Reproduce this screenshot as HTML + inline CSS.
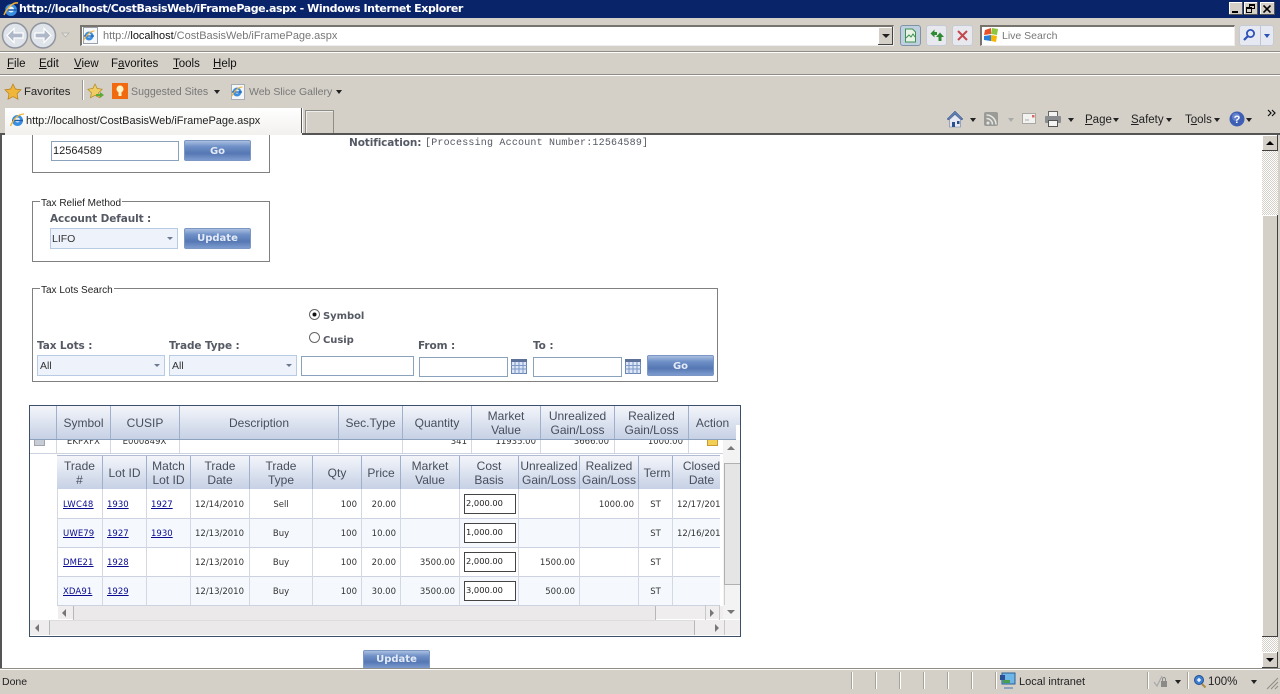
<!DOCTYPE html>
<html><head><meta charset="utf-8"><title>iFramePage</title>
<style>
html,body{margin:0;padding:0;width:1280px;height:694px;overflow:hidden;background:#fff}
body{position:relative;font-family:"Liberation Sans",sans-serif;color:#000}
.a,.t,.c{position:absolute;box-sizing:border-box}
.t{white-space:nowrap;font-size:12px;line-height:14px}
.v{font-family:"DejaVu Sans",sans-serif}
u{text-decoration:underline}
.lb{font-family:"DejaVu Sans",sans-serif;font-weight:bold;font-size:10.5px;line-height:14px;color:#555963;white-space:nowrap;position:absolute;letter-spacing:-.1px}
.fs{position:absolute;box-sizing:border-box;border:1px solid #808080}
.lg{position:absolute;background:#fff;font-size:10px;line-height:12px;padding:0 1px;color:#222;white-space:nowrap}
.btn{position:absolute;box-sizing:border-box;border:1px solid #7c97c4;border-radius:2px;background:linear-gradient(#a9bfe0 0,#6e8fc6 30%,#5577b3 65%,#7d9bcf 100%);color:#e4ebf7;font-family:"DejaVu Sans",sans-serif;font-weight:bold;font-size:10px;text-align:center;line-height:20px}
.inp{position:absolute;box-sizing:border-box;background:#fff;border:1px solid #8ba2bd;font-size:11px;line-height:19px;padding-left:1px;color:#222}
.sel{position:absolute;box-sizing:border-box;background:#edf2fb;border:1px solid #b8cbe4;font-size:10.5px;line-height:20px;padding-left:2px;color:#333}
.sel:after{content:"";position:absolute;right:4px;top:8px;border:3px solid transparent;border-top:3px solid #6b7a90;border-bottom:0}
.hd{position:absolute;background:linear-gradient(#f3f5fa 0,#dfe5f1 45%,#c6d1e5 100%);overflow:hidden}
.hc{position:absolute;top:0;height:100%;box-sizing:border-box;border-right:1px solid #9eb0cb;display:flex;align-items:center;justify-content:center;text-align:center;font-size:12px;line-height:14px;color:#474e5c;padding-top:1px;white-space:nowrap}
.vl{position:absolute;width:1px;background:#d3d8e3}
.hl{position:absolute;height:1px;background:#ccd2df}
.d{position:absolute;font-family:"DejaVu Sans",sans-serif;font-size:8.5px;line-height:12px;color:#333;white-space:nowrap}
.d a{color:#0a0a90;text-decoration:underline}
.r{text-align:right}.m{text-align:center}
.cb{position:absolute;box-sizing:border-box;width:52px;height:20px;border:1px solid #444;background:#fff;font-family:"DejaVu Sans",sans-serif;font-size:8.3px;line-height:16px;padding-left:1px;color:#222}
.sb{position:absolute;background:#eeecec}
.menu{font-size:11.5px;color:#111}
.gray{color:#777}
.tri{position:absolute;width:0;height:0;border:3px solid transparent;border-top:4px solid #222;border-bottom:0}
.sys{position:absolute;top:2px;width:14px;height:13px;background:#d4d0c8;box-shadow:inset -1px -1px #555,inset 1px 1px #fff;font-size:10px;line-height:12px;text-align:center;font-weight:bold}
.pb{position:absolute;left:1262px;width:16px;height:16px;box-sizing:border-box;background:#d4d0c8;box-shadow:inset -1px -1px #404040,inset 1px 1px #fff}
.st{position:absolute;top:672px;height:17px;width:1px;background:#a8a49c;box-shadow:1px 0 #fff}
.tb{position:absolute;top:25px;width:21px;height:21px;box-sizing:border-box;border:1px solid #c6cad4;border-radius:3px;background:#e8e9ef}
</style></head><body>

<!-- chrome backdrop -->
<div class="a" style="left:0;top:0;width:1280px;height:135px;background:#d4d0c8"></div>
<!-- title bar -->
<div class="a" style="left:0;top:0;width:1280px;height:18px;background:#0a246a"></div>
<svg class="a" style="left:2px;top:1px" width="17" height="17" viewBox="0 0 17 17"><circle cx="9" cy="9" r="6" fill="#3a8fe0"/><circle cx="9" cy="8.5" r="3" fill="#e8f2fb"/><path d="M3 9h12" stroke="#1d5fb0" stroke-width="1.6"/><path d="M2 14C6 5 12 1 16 2" stroke="#f2b233" stroke-width="1.5" fill="none"/></svg>
<div class="t v" style="left:19px;top:2px;color:#fff;font-weight:bold;font-size:11px;letter-spacing:-.42px">http://localhost/CostBasisWeb/iFramePage.aspx - Windows Internet Explorer</div>
<div class="sys" style="left:1229px"><div class="a" style="left:3px;top:9px;width:6px;height:2px;background:#000"></div></div>
<div class="sys" style="left:1244px"><div class="a" style="left:5px;top:2px;width:6px;height:5px;border:1px solid #000;border-top-width:2px;box-sizing:border-box"></div><div class="a" style="left:2px;top:5px;width:6px;height:6px;border:1px solid #000;border-top-width:2px;box-sizing:border-box;background:#d4d0c8"></div></div>
<div class="sys" style="left:1260px;width:15px"><svg class="a" style="left:3px;top:3px" width="9" height="8"><path d="M.5.5l7 7M7.5.5l-7 7" stroke="#000" stroke-width="1.6"/></svg></div>

<!-- nav row -->
<svg class="a" style="left:0;top:20px" width="72" height="30" viewBox="0 0 72 30">
<circle cx="15" cy="15.5" r="12.5" fill="#dfe3ea" stroke="#8f949e" stroke-width="1.5"/><circle cx="43" cy="15.5" r="12.5" fill="#dfe3ea" stroke="#8f949e" stroke-width="1.5"/>
<path d="M7 15.5l7-7V13h9v5h-9v4.500z" fill="#aeb8c9" stroke="#fff" stroke-width="1.2"/><path d="M51 15.5l-7-7V13h-9v5h9v4.500z" fill="#aeb8c9" stroke="#fff" stroke-width="1.2"/>
<path d="M62 13h7l-3.500 4z" fill="#e4e2de" stroke="#b0aea8" stroke-width=".7"/></svg>
<div class="a" style="left:80px;top:25px;width:814px;height:21px;background:#fff;border-top:2px solid #77746e;border-left:2px solid #77746e;border-right:1px solid #eee;border-bottom:1px solid #eee"></div>
<div class="a" style="left:83px;top:27px;width:15px;height:17px;background:#f7f8fa;border:1px solid #9aa0aa;box-sizing:border-box"></div>
<svg class="a" style="left:82px;top:29px" width="14" height="14" viewBox="0 0 14 14"><circle cx="7" cy="7" r="4.5" fill="#3a8fe0"/><circle cx="7" cy="6.5" r="2" fill="#e8f2fb"/><path d="M2 7h10" stroke="#1d5fb0" stroke-width="1.2"/><path d="M1.5 11.5C5 5 9 2 12.5 2" stroke="#f2b233" stroke-width="1.1" fill="none"/></svg>
<div class="t" style="left:103px;top:29px;font-size:11px;color:#777;letter-spacing:-.02px">http://<span style="color:#111">localhost</span>/CostBasisWeb/iFramePage.aspx</div>
<div class="a" style="left:878px;top:27px;width:15px;height:18px;background:#d4d0c8;box-shadow:inset -1px -1px #444,inset 1px 1px #fff"></div><div class="tri" style="left:882px;top:34px;border-width:4px;border-top-width:4px;border-bottom:0"></div>
<div class="tb" style="left:900px;background:#bfd0e0;border-color:#7f92a8"><svg width="19" height="19" viewBox="0 0 19 19"><path d="M4.5 3h7l3 3v10h-10z" fill="#e8f3e6" stroke="#3f8f4f"/><path d="M5 12l3-3 2 2 2-3 2 3" fill="none" stroke="#3f8f4f"/></svg></div>
<div class="tb" style="left:926px"><svg width="19" height="19" viewBox="0 0 19 19"><path d="M3.500 7.500l4-4V6H10v3H7.500v2.500z" fill="#2f8a33"/><path d="M13 6.500l4 4.500h-2.500v4h-3v-4H9z" fill="#2f8a33"/></svg></div>
<div class="tb" style="left:952px"><svg width="19" height="19" viewBox="0 0 19 19"><path d="M5 5l9 9M14 5l-9 9" stroke="#c3474f" stroke-width="2"/></svg></div>
<div class="a" style="left:980px;top:25px;width:255px;height:21px;background:#fff;border-top:2px solid #77746e;border-left:2px solid #77746e;border-right:1px solid #eee;border-bottom:1px solid #eee"></div>
<svg class="a" style="left:983px;top:27px" width="17" height="16" viewBox="0 0 17 16"><path d="M2 3l6-2v6l-7 1z" fill="#e8522a"/><path d="M9 1l6 1-1 6-6-1z" fill="#8cc63f"/><path d="M1 9l7-1v6l-7-1z" fill="#2a7fd8"/><path d="M8 8l6 1-1 6-5-1z" fill="#f7b500"/></svg>
<div class="t" style="left:1002px;top:29px;font-size:10.5px;color:#777">Live Search</div>
<div class="a" style="left:1239px;top:25px;width:35px;height:21px;border:1px solid #c6cad4;border-radius:3px;background:#e6e9f2;box-sizing:border-box"></div>
<div class="a" style="left:1260px;top:26px;width:1px;height:19px;background:#c0c4d0"></div>
<svg class="a" style="left:1241px;top:27px" width="17" height="17" viewBox="0 0 17 17"><circle cx="9.5" cy="6.5" r="3.6" fill="none" stroke="#2c52b8" stroke-width="1.8"/><path d="M7 9l-4 4" stroke="#2c52b8" stroke-width="2.2"/></svg>
<div class="tri" style="left:1264px;top:34px;border-top-color:#2c52b8"></div>

<div class="a" style="left:0;top:51px;width:1280px;height:1px;background:#8f8c85"></div>
<div class="a" style="left:0;top:52px;width:1280px;height:1px;background:#fff"></div>

<!-- menu -->
<div class="t menu" style="left:7px;top:57px"><u>F</u>ile</div>
<div class="t menu" style="left:39px;top:57px"><u>E</u>dit</div>
<div class="t menu" style="left:74px;top:57px"><u>V</u>iew</div>
<div class="t menu" style="left:111px;top:57px">F<u>a</u>vorites</div>
<div class="t menu" style="left:173px;top:57px"><u>T</u>ools</div>
<div class="t menu" style="left:213px;top:57px"><u>H</u>elp</div>
<div class="a" style="left:0;top:74px;width:1280px;height:1px;background:#8f8c85"></div>
<div class="a" style="left:0;top:75px;width:1280px;height:1px;background:#fff"></div>

<!-- favorites bar -->
<svg class="a" style="left:4px;top:83px" width="18" height="17" viewBox="0 0 18 17"><path d="M9 1l2.4 5 5.6.8-4 3.900 1 5.500L9 13.600 4 16.200l1-5.500-4-3.900L6.600 6z" fill="#f0b63a" stroke="#b77d1a" stroke-width=".7"/></svg>
<div class="t" style="left:24px;top:85px;font-size:11.3px;color:#222">Favorites</div>
<div class="a" style="left:82px;top:80px;width:1px;height:20px;background:#9c9890;box-shadow:1px 0 #fff"></div>
<svg class="a" style="left:87px;top:83px" width="18" height="17" viewBox="0 0 18 17"><path d="M8 1l2.200 4.500 5 .7-3.600 3.500.9 5L8 12.300 3.500 14.700l.9-5L.8 6.200l5-.7z" fill="#f0cc62" stroke="#b08a1a" stroke-width=".7"/><path d="M9 11h4V9l4 3-4 3v-2H9z" fill="#5fa83a"/></svg>
<div class="a" style="left:112px;top:83px;width:16px;height:16px;background:#f26a10"></div>
<svg class="a" style="left:112px;top:83px" width="16" height="16" viewBox="0 0 16 16"><circle cx="8" cy="6" r="3.500" fill="#fff3c8"/><rect x="6.500" y="9" width="3" height="4" fill="#fff3c8"/></svg>
<div class="t gray" style="left:131px;top:85px;font-size:10.6px">Suggested Sites</div><div class="tri" style="left:214px;top:90px"></div>
<div class="a" style="left:231px;top:84px;width:14px;height:16px;background:#f5f6f8;border:1px solid #a8acb4;box-sizing:border-box"></div>
<svg class="a" style="left:230px;top:85px" width="14" height="14" viewBox="0 0 14 14"><circle cx="7" cy="7" r="4.500" fill="#3a8fe0"/><circle cx="7" cy="6.500" r="2" fill="#e8f2fb"/><path d="M2 7h10" stroke="#1d5fb0" stroke-width="1.200"/><path d="M1.500 11.500C5 5 9 2 12.500 2" stroke="#f2b233" stroke-width="1.100" fill="none"/></svg>
<div class="t gray" style="left:249px;top:85px;font-size:10.5px">Web Slice Gallery</div><div class="tri" style="left:336px;top:90px"></div>

<!-- tab row -->
<div class="a" style="left:5px;top:108px;width:297px;height:27px;background:linear-gradient(#fff,#f2f1ee);border-right:1px solid #555;box-shadow:1px 0 #fff"></div>
<svg class="a" style="left:9px;top:112px" width="16" height="16" viewBox="0 0 16 16"><circle cx="8.500" cy="8.500" r="5.500" fill="#3a8fe0"/><circle cx="8.500" cy="8" r="2.500" fill="#e8f2fb"/><path d="M3 8.500h11" stroke="#1d5fb0" stroke-width="1.400"/><path d="M1.500 14C5 6 10 2 15 2" stroke="#f2b233" stroke-width="1.300" fill="none"/></svg>
<div class="t" style="left:26px;top:114px;font-size:11px;color:#222;letter-spacing:-.02px">http://localhost/CostBasisWeb/iFramePage.aspx</div>
<div class="a" style="left:305px;top:110px;width:29px;height:25px;border:1px solid #8f8c85;border-bottom:0;box-sizing:border-box;box-shadow:inset 1px 1px #eee"></div>
<div class="a" style="left:0;top:133px;width:1280px;height:2px;background:#555"></div>
<div class="a" style="left:5px;top:133px;width:297px;height:2px;background:#f2f1ee"></div>

<!-- command bar -->
<svg class="a" style="left:946px;top:110px" width="18" height="18" viewBox="0 0 18 18"><path d="M1 9l8-8 8 8-1.500 1L9 4 2.500 10z" fill="#5b7db5" stroke="#39527f" stroke-width=".5"/><path d="M3.500 9.500V17h11V9.500L9 4.500z" fill="#e6e9f1" stroke="#6a7ea6" stroke-width=".6"/><rect x="6" y="12" width="3" height="5" fill="#2c4f90"/><rect x="11" y="11" width="2.500" height="3" fill="#2c4f90"/></svg>
<div class="tri" style="left:970px;top:118px"></div>
<svg class="a" style="left:984px;top:112px" width="15" height="15" viewBox="0 0 15 15"><rect width="14" height="14" rx="2" fill="#9a9a96"/><circle cx="4" cy="11" r="1.500" fill="#e6e6e2"/><path d="M2.500 6.500a6 6 0 0 1 6 6M2.500 3a9.500 9.500 0 0 1 9.500 9.500" stroke="#e6e6e2" stroke-width="1.500" fill="none"/></svg>
<div class="tri" style="left:1008px;top:118px;border-top-color:#aaa"></div>
<svg class="a" style="left:1022px;top:113px" width="15" height="12" viewBox="0 0 15 12"><rect x=".5" y=".5" width="13" height="10" fill="#f2f2f0" stroke="#aaa8a2"/><rect x="10" y="2" width="2.500" height="2.500" fill="#d66"/><path d="M3 7h4" stroke="#aaa"/></svg>
<svg class="a" style="left:1044px;top:111px" width="18" height="16" viewBox="0 0 18 16"><rect x="4.500" y=".5" width="9" height="5" fill="#f4f4f2" stroke="#666"/><rect x="1" y="5" width="16" height="7" rx="1" fill="#8a8c90"/><rect x="4.500" y="9.500" width="9" height="6" fill="#f4f4f2" stroke="#555"/></svg>
<div class="tri" style="left:1068px;top:118px"></div>
<div class="t" style="left:1085px;top:113px;font-size:11.5px;color:#222"><u>P</u>age</div><div class="tri" style="left:1113px;top:118px"></div>
<div class="t" style="left:1131px;top:113px;font-size:11.5px;color:#222"><u>S</u>afety</div><div class="tri" style="left:1166px;top:118px"></div>
<div class="t" style="left:1185px;top:113px;font-size:11.5px;color:#222">T<u>o</u>ols</div><div class="tri" style="left:1214px;top:118px"></div>
<svg class="a" style="left:1229px;top:111px" width="16" height="16" viewBox="0 0 16 16"><circle cx="8" cy="8" r="7.500" fill="#3f5fb5"/><circle cx="7" cy="6" r="4" fill="#7f9bdd" opacity=".6"/><text x="8" y="12" text-anchor="middle" font-family="Liberation Sans" font-weight="bold" font-size="11" fill="#fff">?</text></svg>
<div class="tri" style="left:1246px;top:118px"></div>
<svg class="a" style="left:1267px;top:109px" width="10" height="8" viewBox="0 0 10 8"><path d="M1 1l3 3-3 3M5 1l3 3-3 3" stroke="#111" fill="none" stroke-width="1.200"/></svg>

<!-- page frame -->
<div class="a" style="left:0;top:135px;width:2px;height:534px;background:#555"></div>

<!-- top fieldset (cut) -->
<div class="a" style="left:32px;top:135px;width:238px;height:38px;box-sizing:border-box;border:1px solid #808080;border-top:0"></div>
<div class="inp" style="left:51px;top:141px;width:128px;height:20px">12564589</div>
<div class="btn" style="left:184px;top:140px;width:67px;height:21px;line-height:21px">Go</div>
<div class="lb" style="left:349px;top:136px">Notification:</div>
<div class="t" style="left:425px;top:137px;font-family:'Liberation Mono',monospace;font-size:10px;color:#555963;letter-spacing:.2px;line-height:14px">[Processing Account Number:12564589]</div>

<!-- tax relief -->
<div class="fs" style="left:32px;top:201px;width:238px;height:61px"></div>
<div class="lg" style="left:40px;top:198px">Tax Relief Method</div>
<div class="lb" style="left:50px;top:212px">Account Default :</div>
<div class="sel" style="left:50px;top:228px;width:128px;height:21px;padding-left:1px">LIFO</div>
<div class="btn" style="left:184px;top:228px;width:67px;height:21px">Update</div>

<!-- tax lots -->
<div class="fs" style="left:32px;top:288px;width:686px;height:94px"></div>
<div class="lg" style="left:40px;top:285px">Tax Lots Search</div>
<svg class="a" style="left:308px;top:308px" width="13" height="13" viewBox="0 0 13 13"><circle cx="6.500" cy="6.500" r="5" fill="#fff" stroke="#666" stroke-width="1"/><circle cx="6.500" cy="6.500" r="2" fill="#111"/></svg>
<svg class="a" style="left:308px;top:331px" width="13" height="13" viewBox="0 0 13 13"><circle cx="6.500" cy="6.500" r="5" fill="#fff" stroke="#666" stroke-width="1"/></svg>
<div class="lb" style="left:323px;top:310px;font-size:10px;letter-spacing:-.05px">Symbol</div>
<div class="lb" style="left:323px;top:334px;font-size:10px;letter-spacing:-.05px">Cusip</div>
<div class="lb" style="left:37px;top:339px">Tax Lots :</div>
<div class="lb" style="left:169px;top:339px">Trade Type :</div>
<div class="lb" style="left:418px;top:339px">From :</div>
<div class="lb" style="left:533px;top:339px">To :</div>
<div class="sel" style="left:37px;top:355px;width:128px;height:21px">All</div>
<div class="sel" style="left:169px;top:355px;width:128px;height:21px">All</div>
<div class="inp" style="left:301px;top:356px;width:113px;height:20px"></div>
<div class="inp" style="left:419px;top:357px;width:89px;height:20px"></div>
<div class="inp" style="left:533px;top:357px;width:89px;height:20px"></div>
<svg class="a" style="left:511px;top:359px" width="16" height="15" viewBox="0 0 16 15"><rect x=".5" y=".5" width="15" height="14" fill="#dbe6f6" stroke="#6b85b5"/><rect x="0" y="0" width="16" height="3" fill="#5d7099"/><path d="M4 3v12M8 3v12M12 3v12M0 6.500h16M0 10h16" stroke="#7d97c6"/></svg>
<svg class="a" style="left:625px;top:359px" width="16" height="15" viewBox="0 0 16 15"><rect x=".5" y=".5" width="15" height="14" fill="#dbe6f6" stroke="#6b85b5"/><rect x="0" y="0" width="16" height="3" fill="#5d7099"/><path d="M4 3v12M8 3v12M12 3v12M0 6.500h16M0 10h16" stroke="#7d97c6"/></svg>
<div class="btn" style="left:647px;top:355px;width:67px;height:21px;line-height:21px">Go</div>

<!-- grid -->
<div class="a" style="left:29px;top:405px;width:712px;height:232px;border:1px solid #3d4f6a;box-sizing:border-box;background:#fff"></div>

<!-- parent row (clipped) -->
<div class="d m" style="left:57px;top:436px;width:53px;letter-spacing:.1px">EKPXFX</div>
<div class="d m" style="left:110px;top:436px;width:69px">E000849X</div>
<div class="d r" style="left:402px;top:436px;width:65px">341</div>
<div class="d r" style="left:471px;top:436px;width:65px">11935.00</div>
<div class="d r" style="left:540px;top:436px;width:69px">3666.00</div>
<div class="d r" style="left:614px;top:436px;width:69px">1000.00</div>
<div class="a" style="left:34px;top:440px;width:11px;height:6px;background:#c8ccd4;border:1px solid #a0a4ac;border-top:0;box-sizing:border-box"></div>
<div class="a" style="left:707px;top:440px;width:11px;height:6px;background:#f3cf55;border:1px solid #c89a30;border-top:0;box-sizing:border-box"></div>
<div class="vl" style="left:56px;top:440px;height:14px"></div>
<div class="vl" style="left:110px;top:440px;height:14px"></div>
<div class="vl" style="left:179px;top:440px;height:14px"></div>
<div class="vl" style="left:338px;top:440px;height:14px"></div>
<div class="vl" style="left:402px;top:440px;height:14px"></div>
<div class="vl" style="left:471px;top:440px;height:14px"></div>
<div class="vl" style="left:540px;top:440px;height:14px"></div>
<div class="vl" style="left:614px;top:440px;height:14px"></div>
<div class="vl" style="left:688px;top:440px;height:14px"></div>
<div class="hl" style="left:30px;top:453px;width:693px"></div>

<!-- parent header -->
<div class="hd" style="left:30px;top:406px;width:710px;height:34px;border-bottom:1px solid #8ea2c0;box-sizing:border-box">
<div class="hc" style="left:0;width:27px"></div>
<div class="hc" style="left:27px;width:54px">Symbol</div>
<div class="hc" style="left:81px;width:69px">CUSIP</div>
<div class="hc" style="left:150px;width:159px">Description</div>
<div class="hc" style="left:309px;width:64px">Sec.Type</div>
<div class="hc" style="left:373px;width:69px">Quantity</div>
<div class="hc" style="left:442px;width:69px">Market<br>Value</div>
<div class="hc" style="left:511px;width:74px">Unrealized<br>Gain/Loss</div>
<div class="hc" style="left:585px;width:74px">Realized<br>Gain/Loss</div>
<div class="hc" style="left:659px;width:47px;border-right:0">Action</div>
</div>
<div class="a" style="left:736px;top:425px;width:4px;height:15px;background:#fff"></div>

<!-- nested grid -->
<div class="hd" style="left:57px;top:455px;width:663px;height:34px;border-top:1px solid #b0bdd4;box-sizing:border-box">
<div class="hc" style="left:0;width:46px">Trade<br>#</div>
<div class="hc" style="left:46px;width:44px">Lot ID</div>
<div class="hc" style="left:90px;width:44px">Match<br>Lot ID</div>
<div class="hc" style="left:134px;width:59px">Trade<br>Date</div>
<div class="hc" style="left:193px;width:63px">Trade<br>Type</div>
<div class="hc" style="left:256px;width:49px">Qty</div>
<div class="hc" style="left:305px;width:39px">Price</div>
<div class="hc" style="left:344px;width:59px">Market<br>Value</div>
<div class="hc" style="left:403px;width:59px">Cost<br>Basis</div>
<div class="hc" style="left:462px;width:61px">Unrealized<br>Gain/Loss</div>
<div class="hc" style="left:523px;width:59px">Realized<br>Gain/Loss</div>
<div class="hc" style="left:582px;width:34px;padding-left:3px">Term</div>
<div class="hc" style="left:616px;width:57px;border-right:0">Closed<br>Date</div>
</div>
<div class="a" style="left:57px;top:518px;width:663px;height:29px;background:#f5f9fd"></div>
<div class="a" style="left:57px;top:576px;width:663px;height:29px;background:#f5f9fd"></div>
<div class="hl" style="left:57px;top:518px;width:663px"></div>
<div class="hl" style="left:57px;top:547px;width:663px"></div>
<div class="hl" style="left:57px;top:576px;width:663px"></div>
<div class="hl" style="left:57px;top:605px;width:663px"></div>
<div class="vl" style="left:57px;top:489px;height:116px"></div>
<div class="vl" style="left:102px;top:489px;height:116px"></div>
<div class="vl" style="left:146px;top:489px;height:116px"></div>
<div class="vl" style="left:190px;top:489px;height:116px"></div>
<div class="vl" style="left:249px;top:489px;height:116px"></div>
<div class="vl" style="left:312px;top:489px;height:116px"></div>
<div class="vl" style="left:361px;top:489px;height:116px"></div>
<div class="vl" style="left:400px;top:489px;height:116px"></div>
<div class="vl" style="left:459px;top:489px;height:116px"></div>
<div class="vl" style="left:518px;top:489px;height:116px"></div>
<div class="vl" style="left:579px;top:489px;height:116px"></div>
<div class="vl" style="left:638px;top:489px;height:116px"></div>
<div class="vl" style="left:672px;top:489px;height:116px"></div>

<!-- row 1 -->
<div class="d" style="left:63px;top:499px;letter-spacing:.3px"><a>LWC48</a></div><div class="d" style="left:107px;top:499px"><a>1930</a></div><div class="d" style="left:151px;top:499px"><a>1927</a></div><div class="d" style="left:195px;top:499px">12/14/2010</div><div class="d m" style="left:250px;top:499px;width:62px">Sell</div><div class="d r" style="left:313px;top:499px;width:44px">100</div><div class="d r" style="left:362px;top:499px;width:34px">20.00</div>
<div class="cb" style="left:464px;top:494px">2,000.00</div><div class="d r" style="left:580px;top:499px;width:54px">1000.00</div><div class="d m" style="left:639px;top:499px;width:33px">ST</div>
<div class="d" style="left:677px;top:499px;width:43px;overflow:hidden">12/17/2010</div>
<!-- row 2 -->
<div class="d" style="left:63px;top:528px;letter-spacing:.1px"><a>UWE79</a></div><div class="d" style="left:107px;top:528px"><a>1927</a></div><div class="d" style="left:151px;top:528px"><a>1930</a></div><div class="d" style="left:195px;top:528px">12/13/2010</div><div class="d m" style="left:250px;top:528px;width:62px">Buy</div><div class="d r" style="left:313px;top:528px;width:44px">100</div><div class="d r" style="left:362px;top:528px;width:34px">10.00</div>
<div class="cb" style="left:464px;top:523px">1,000.00</div><div class="d m" style="left:639px;top:528px;width:33px">ST</div>
<div class="d" style="left:677px;top:528px;width:43px;overflow:hidden">12/16/2010</div>
<!-- row 3 -->
<div class="d" style="left:63px;top:557px;letter-spacing:.1px"><a>DME21</a></div><div class="d" style="left:107px;top:557px"><a>1928</a></div><div class="d" style="left:195px;top:557px">12/13/2010</div><div class="d m" style="left:250px;top:557px;width:62px">Buy</div><div class="d r" style="left:313px;top:557px;width:44px">100</div><div class="d r" style="left:362px;top:557px;width:34px">20.00</div>
<div class="d r" style="left:401px;top:557px;width:54px">3500.00</div><div class="cb" style="left:464px;top:552px">2,000.00</div><div class="d r" style="left:519px;top:557px;width:56px">1500.00</div><div class="d m" style="left:639px;top:557px;width:33px">ST</div>
<!-- row 4 -->
<div class="d" style="left:63px;top:586px;letter-spacing:.1px"><a>XDA91</a></div><div class="d" style="left:107px;top:586px"><a>1929</a></div><div class="d" style="left:195px;top:586px">12/13/2010</div><div class="d m" style="left:250px;top:586px;width:62px">Buy</div><div class="d r" style="left:313px;top:586px;width:44px">100</div><div class="d r" style="left:362px;top:586px;width:34px">30.00</div>
<div class="d r" style="left:401px;top:586px;width:54px">3500.00</div><div class="cb" style="left:464px;top:581px">3,000.00</div><div class="d r" style="left:519px;top:586px;width:56px">500.00</div><div class="d m" style="left:639px;top:586px;width:33px">ST</div>

<!-- nested vertical scrollbar -->
<div class="sb" style="left:723px;top:440px;width:17px;height:179px;background:#f4f3f3"></div>
<div class="a" style="left:724px;top:463px;width:16px;height:122px;background:#e6e5e5;border:1px solid #b0b0b0;border-right:0;box-sizing:border-box"></div>
<div class="a" style="left:724px;top:585px;width:16px;height:20px;border-left:1px solid #cfcfcf;box-sizing:border-box"></div>
<div class="a" style="left:727px;top:446px;border:4px solid transparent;border-bottom:4px solid #777;border-top:0"></div>
<div class="a" style="left:727px;top:610px;border:4px solid transparent;border-top:4px solid #777;border-bottom:0"></div>
<!-- nested horizontal scrollbar -->
<div class="sb" style="left:58px;top:606px;width:665px;height:13px;background:#efeded"></div>
<div class="a" style="left:73px;top:606px;width:583px;height:14px;background:#ebe9e9;border-left:1px solid #b8b8b8;border-right:1px solid #b8b8b8;box-sizing:border-box"></div>
<div class="a" style="left:705px;top:605px;width:15px;height:15px;border-left:1px solid #c8c8c8;border-right:1px solid #c8c8c8;box-sizing:border-box"></div>
<div class="a" style="left:62px;top:609px;border:4px solid transparent;border-right:4px solid #777;border-left:0"></div>
<div class="a" style="left:710px;top:609px;border:4px solid transparent;border-left:4px solid #777;border-right:0"></div>
<!-- outer horizontal scrollbar -->
<div class="sb" style="left:30px;top:620px;width:710px;height:15px;background:#efeded"></div>
<div class="a" style="left:49px;top:620px;width:646px;height:15px;background:#ebe9e9;border-left:1px solid #b8b8b8;border-right:1px solid #b8b8b8;border-top:1px solid #ddd;box-sizing:border-box"></div>
<div class="a" style="left:724px;top:620px;width:1px;height:15px;background:#c8c8c8"></div>
<div class="a" style="left:35px;top:624px;border:4px solid transparent;border-right:4px solid #777;border-left:0"></div>
<div class="a" style="left:715px;top:624px;border:4px solid transparent;border-left:4px solid #777;border-right:0"></div>

<div class="btn" style="left:363px;top:650px;width:67px;height:19px;line-height:18px">Update</div>

<!-- page scrollbar -->
<div class="a" style="left:1262px;top:135px;width:16px;height:533px;background:repeating-conic-gradient(#d4d0c8 0 25%,#fff 0 50%) 0 0/2px 2px"></div>
<div class="pb" style="top:135px"></div><div class="a" style="left:1266px;top:141px;border:4px solid transparent;border-bottom:4px solid #000;border-top:0"></div>
<div class="pb" style="top:215px;height:422px"></div>
<div class="pb" style="top:652px"></div><div class="a" style="left:1266px;top:658px;border:4px solid transparent;border-top:4px solid #000;border-bottom:0"></div>
<div class="a" style="left:1278px;top:135px;width:2px;height:534px;background:#d4d0c8"></div>

<!-- status bar -->
<div class="a" style="left:0;top:668px;width:1280px;height:26px;background:#d4d0c8;border-top:1px solid #8f8c85;box-shadow:inset 0 1px #fff;box-sizing:border-box"></div>
<div class="t" style="left:2px;top:675px;font-size:10.5px;color:#222">Done</div>
<div class="st" style="left:851px"></div><div class="st" style="left:875px"></div><div class="st" style="left:899px"></div><div class="st" style="left:923px"></div><div class="st" style="left:947px"></div><div class="st" style="left:971px"></div><div class="st" style="left:995px"></div><div class="st" style="left:1147px"></div><div class="st" style="left:1187px"></div>
<svg class="a" style="left:999px;top:672px" width="17" height="18" viewBox="0 0 17 18"><rect x="3" y="1" width="13" height="11" fill="#6fb6e8" stroke="#2a5f95"/><path d="M1 3h5v5H1z" fill="#2a4f95"/><path d="M4 8h7v3H4z" fill="#48a04c"/><path d="M5 15h9v2H5z" fill="#8da2c0"/></svg>
<div class="t" style="left:1019px;top:675px;font-size:11px;color:#222">Local intranet</div>
<svg class="a" style="left:1153px;top:674px" width="16" height="15" viewBox="0 0 16 15"><path d="M1 8l3 4 5-10" stroke="#aaa" fill="none" stroke-width="1.300"/><rect x="8" y="7" width="6" height="6" fill="#8a8a86"/><path d="M9.500 7V5a1.500 1.500 0 0 1 3 0v2" stroke="#8a8a86" fill="none"/></svg>
<div class="tri" style="left:1175px;top:680px"></div>
<svg class="a" style="left:1193px;top:674px" width="14" height="15" viewBox="0 0 14 15"><circle cx="6" cy="6" r="4.500" fill="#3f7fd0" stroke="#1f4f96"/><path d="M4 6h4M6 4v4" stroke="#fff" stroke-width="1.300"/><path d="M9 10l3.500 3.500" stroke="#b08a4a" stroke-width="2"/></svg>
<div class="t" style="left:1208px;top:675px;font-size:11.5px;color:#222">100%</div>
<div class="tri" style="left:1251px;top:680px"></div>
<svg class="a" style="left:1266px;top:677px" width="13" height="13" viewBox="0 0 13 13"><path d="M12 1L1 12M12 5l-7 7M12 9l-3 3" stroke="#8f8c85"/></svg>
</body></html>
